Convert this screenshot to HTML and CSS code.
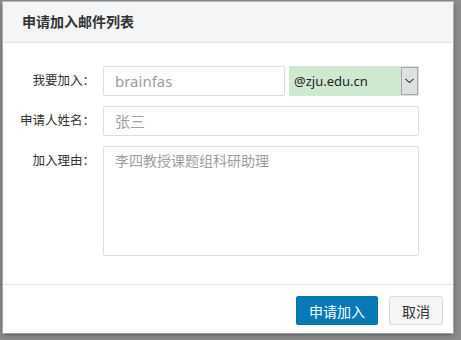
FILE: index.html
```html
<!DOCTYPE html>
<html lang="zh-CN">
<head>
<meta charset="utf-8">
<link rel="stylesheet" href="styles.css">
</head>
<body>
<div class="dialog">
  <div class="dialog-header">申请加入邮件列表</div>
  <div class="dialog-body">
    <div class="row">
      <label class="label">我要加入：</label>
      <div class="field split">
        <input class="input user" type="text" placeholder="brainfas">
        <div class="select">
          <span class="select-text">@zju.edu.cn</span>
          <span class="select-arrow"><svg width="9" height="6" viewBox="0 0 9 6"><path d="M0.5 0.8 L4.5 4.6 L8.5 0.8" fill="none" stroke="#333" stroke-width="1.1"/></svg></span>
        </div>
      </div>
    </div>
    <div class="row">
      <label class="label">申请人姓名：</label>
      <div class="field"><input class="input" type="text" placeholder="张三"></div>
    </div>
    <div class="row">
      <label class="label">加入理由：</label>
      <div class="field"><textarea class="input area" placeholder="李四教授课题组科研助理"></textarea></div>
    </div>
  </div>
  <div class="dialog-footer">
    <button class="btn btn-primary">申请加入</button>
    <button class="btn btn-default">取消</button>
  </div>
</div>
</body>
</html>
```
FILE: styles.css
```css
* { box-sizing: border-box; }
html, body { margin: 0; height: 100%; }
body {
  background: #8c8c8c;
  padding: 2px 0 0 3px;
  font-family: "Noto Sans", "Noto Sans CJK SC", sans-serif;
  color: #333;
}
.dialog {
  width: 450px;
  height: 331px;
  background: #fff;
  box-shadow: 0 2px 6px rgba(0,0,0,0.35), 0 0 0 1px rgba(255,255,255,0.5);
  display: flex;
  flex-direction: column;
}
.dialog-header {
  height: 41px;
  background: #f3f5f7;
  border-bottom: 1px solid #e3e3e3;
  padding-left: 19px;
  font-size: 14px;
  font-weight: bold;
  line-height: 40px;
  color: #333;
}
.dialog-body {
  padding: 23px 0 0 0;
  height: 241px;
  display: flex;
  flex-direction: column;
  gap: 10px;
}
.row {
  display: flex;
  align-items: flex-start;
}
.label {
  width: 92px;
  text-align: right;
  font-size: 12.5px;
  line-height: 30px;
  color: #333;
  flex: none;
}
.field {
  margin-left: 8px;
  width: 316px;
  display: flex;
}
.split { gap: 4px; }
.input {
  width: 316px;
  height: 30px;
  border: 1px solid #ddd;
  border-radius: 2px;
  padding: 0 10px 0 11px;
  font-family: inherit;
  font-size: 15px;
  color: #333;
  outline: none;
  background: #fff;
}
.input.user { width: 182px; }
.input::placeholder { color: #9e9e9e; }
.area {
  height: 110px;
  padding: 4px 11px;
  resize: none;
  font-size: 14px;
  line-height: 20px;
}
.select {
  width: 130px;
  height: 30px;
  background: #cee9cf;
  display: flex;
  align-items: center;
  justify-content: space-between;
  padding: 1px 1px 1px 5px;
}
.select-text {
  font-size: 13px;
  color: #222;
}
.select-arrow {
  width: 17px;
  height: 28px;
  background: #e0e0e0;
  border: 1px solid #a8a8a8;
  display: flex;
  align-items: center;
  justify-content: center;
}
.dialog-footer {
  border-top: 1px solid #e3e3e3;
  padding: 11px 10px 0 0;
  display: flex;
  justify-content: flex-end;
  gap: 11px;
}
.btn {
  height: 29px;
  font-family: inherit;
  font-size: 14px;
  border-radius: 2px;
  padding: 0;
}
.btn-primary {
  width: 82px;
  background: #0779b7;
  border: 1px solid #0672ad;
  color: #fff;
}
.btn-default {
  width: 54px;
  background: #f4f5f6;
  border: 1px solid #dcdcdc;
  color: #333;
}
```
